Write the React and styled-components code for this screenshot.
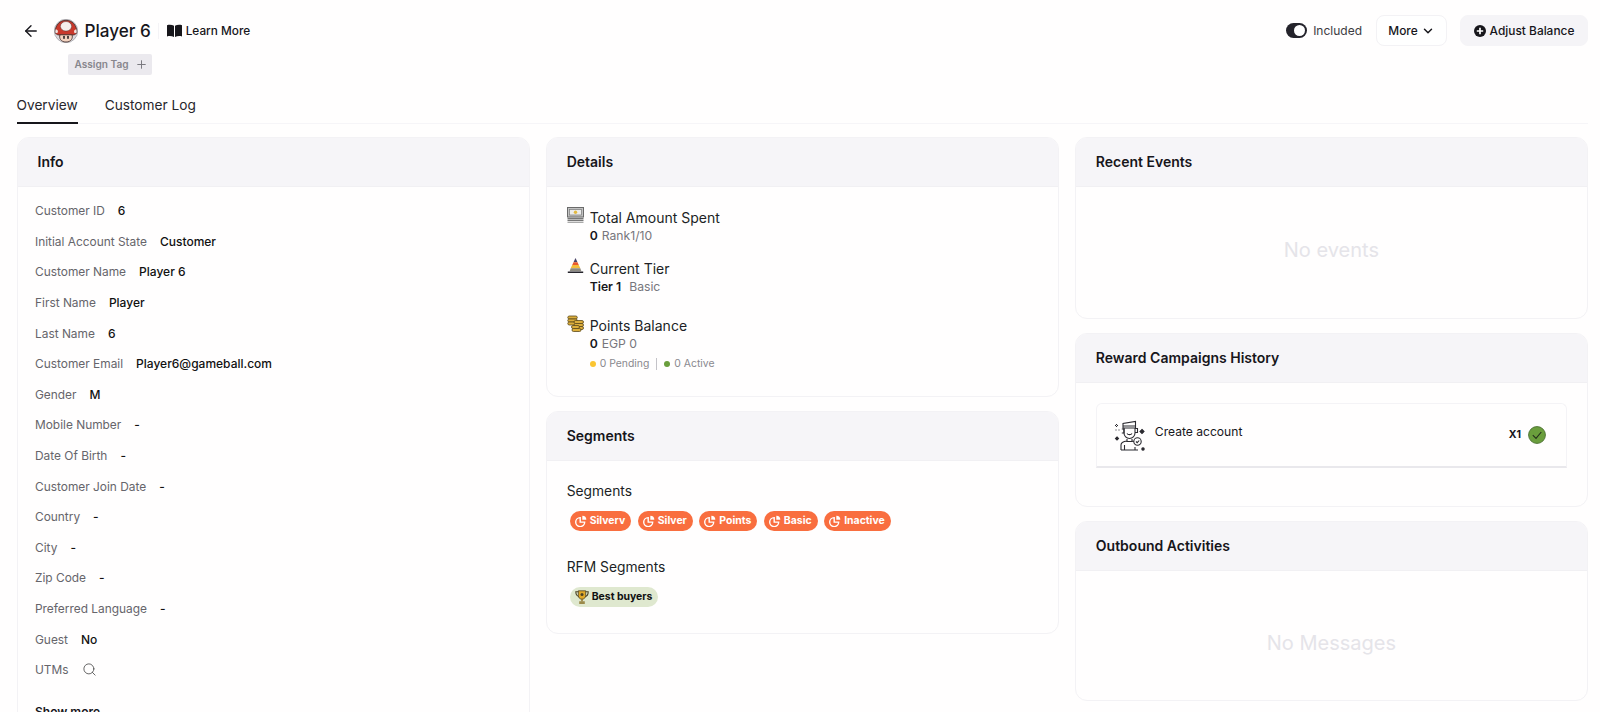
import React from "react";
import styled, { createGlobalStyle } from "styled-components";
import { ArrowLeft, Plus, ChevronDown, Search } from "lucide-react";

const Global = createGlobalStyle`
  html, body { margin: 0; height: 712px; overflow: hidden; background: #fffefe; }
  body { font-family: Inter, "Liberation Sans", sans-serif; color: #17161b; }
  * { box-sizing: border-box; }
`;
const Page = styled.div`height: 712px; overflow: hidden; padding: 15px 12px 0 16.5px;`;
const TopBar = styled.header`display: flex; justify-content: space-between; align-items: flex-start; height: 37px;`;
const Identity = styled.div`display: flex; align-items: center; height: 31px; padding-left: 5px;`;
const Back = styled.span`display: flex; width: 32px; color: #17161b;`;
const Name = styled.h1`margin: 0 0 0 7px; font-size: 17.1px; line-height: 31px; font-weight: 500;`;
const Divider = styled.span`width: 1px; height: 16px; background: #f4f3f6; margin: 0 8px 0 7px;`;
const LearnMore = styled.a`display: flex; align-items: center; gap: 4px; font-size: 11.8px; font-weight: 500;`;
const Actions = styled.div`display: flex; align-items: center; height: 31px;`;
const Toggle = styled.span`position: relative; width: 21px; height: 15px; border-radius: 8px; background: #24232b;
  &::after { content: ""; position: absolute; top: 2px; right: 2px; width: 11px; height: 11px; border-radius: 50%; background: #fff; }`;
const Included = styled.span`margin: 0 14px 0 6px; font-size: 12px; color: #3c3b42;`;
const Button = styled.button`display: flex; align-items: center; justify-content: center; height: 31px; width: ${p => p.$w}px;
  gap: ${p => p.$gap}px; padding: 0; font: 500 11.9px Inter, sans-serif; color: #17161b; border-radius: 8px;
  border: 1px solid ${p => p.$fill ? "#f5f4f7" : "#f3f2f5"}; background: ${p => p.$fill ? "#f5f4f7" : "#fff"};`;
const MoreButton = styled(Button)`margin-right: 13px;`;
const TagBox = styled.div`display: inline-flex; align-items: center; gap: 6px; margin-left: 51.500px; height: 21px; width: 84px; padding-left: 6.500px;
  border-radius: 2px; background: #ebe9ee; color: #87868c; font-size: 10.1px; font-weight: 600;`;
const Tabs = styled.nav`display: flex; gap: 27px; margin-top: 19px; height: 30px; border-bottom: 1px solid #f6f5f8;`;
const Tab = styled.span`height: 30px; font-size: 13.7px; line-height: 22px; color: #27262c; border-bottom: ${p => p.$on ? "2px solid #17161b" : "0"};`;
const Grid = styled.main`display: grid; grid-template-columns: repeat(3, 513.170px); gap: 16px; margin-top: 13px; align-items: start;`;
const Column = styled.div`display: flex; flex-direction: column; gap: 14px;`;
const Card = styled.section`border: 1px solid #f3f2f5; border-radius: 12px; background: #fffefe; overflow: hidden; height: ${p => p.$h}px;`;
const CardHead = styled.h2`margin: 0; height: 49px; padding: 0 0 1px 20px; display: flex; align-items: center; background: #f6f5f8;
  font-size: 14px; font-weight: 600; border-bottom: 1px solid #f1f0f3;`;
const InfoBody = styled.div`padding: 9px 0 0 17.500px;`;
const InfoRow = styled.div`display: flex; align-items: center; gap: 13px; height: 30.6px; font-size: 12px;`;
const Label = styled.span`color: #66656b; font-size: 11.9px;`;
const Val = styled.span`font-weight: 500; color: #111;`;
const ShowMore = styled.div`margin-top: 19px; font-size: 12px; font-weight: 600;`;
const DetailsBody = styled.div`padding: 22px 20px 0;`;
const Stat = styled.div`display: grid; grid-template-columns: 17px 1fr; column-gap: 6px; margin-bottom: ${p => p.$mb}px;`;
const StatIcon = styled.span`display: block; margin-top: -2px; height: 17px;`;
const StatTitle = styled.div`font-size: 14px; line-height: 18px; color: #201f25;`;
const StatSub = styled.div`grid-column: 2; font-size: 12.2px; line-height: 18px; color: #77767c; b { font-weight: 600; color: #17161b; margin-right: ${p => p.$mr}px; }`;
const StatusLine = styled.div`grid-column: 2; display: flex; align-items: center; margin-top: 2px; height: 18px; font-size: 10.4px; color: #8a898f;`;
const Dot = styled.i`width: 6px; height: 6px; border-radius: 50%; background: ${p => p.$c}; margin-right: 4px;`;
const Sep = styled.i`width: 1px; height: 12px; background: #c4c3c8; margin: 0 7px;`;
const SegBody = styled.div`padding: 21px 20px 0;`;
const SegTitle = styled.div`font-size: 13.8px; line-height: 18px; color: #201f25;`;
const Chips = styled.div`display: flex; gap: 6.500px; margin: 11px 0 27px 3px;`;
const Chip = styled.span`display: inline-flex; align-items: center; justify-content: center; gap: 3px; height: 20px; padding: 0 6px 0 5px; border-radius: 10px;
  background: ${p => p.$bg}; color: ${p => p.$c}; font-size: 10.45px; font-weight: 700;`;
const Empty = styled.div`display: flex; align-items: center; justify-content: center; height: ${p => p.$h}px; padding-top: ${p => p.$pt}px; font-size: 20px; color: #e5e4e9;`;
const RewardBody = styled.div`padding: 20px 20px 0;`;
const RewardRow = styled.div`display: flex; height: 65px; padding: 15px 20px 0 16px; border: 1px solid #f4f3f6; border-bottom: 2px solid #e9e8ec; border-radius: 6px 6px 0 0;`;
const RewardText = styled.span`margin-left: 9px; font-size: 12.1px; line-height: 26px; flex: 1;`;
const Times = styled.span`font-size: 10.5px; font-weight: 700; margin: 9px 7px 0 0; line-height: 14px;`;
const Check = styled.span`display: block; margin-top: 7px; height: 18px;`;

const Book = () => <svg width="15" height="13" viewBox="0 0 15 13"><path fill="#17161b" d="M0 1.2C2.4.4 5 .6 7 1.8V13c-2-1.100-4.600-1.300-7-.6zM15 1.200C12.600.4 10 .6 8 1.800V13c2-1.100 4.600-1.300 7-.6z"/></svg>;
const Mushroom = () => <svg width="24" height="24" viewBox="0 0 24 24">
  <circle cx="12" cy="12" r="11.700" fill="#dcdbdf" stroke="#8d8c92" strokeWidth=".6"/>
  <path d="M1.200 13C1.200 6 6 1.300 12 1.300S22.800 6 22.800 13c0 1.800-2 3-4 3H5.200c-2 0-4-1.200-4-3z" fill="#c9392c" stroke="#3f2724" strokeWidth=".8"/>
  <ellipse cx="12" cy="7.300" rx="5.600" ry="4.800" fill="#f5efec" stroke="#5a3330" strokeWidth=".5"/>
  <path d="M1.600 10.500c2.200-.4 3.200 2.400 1.400 3.800l-1.800-.7zM22.400 10.500c-2.200-.4-3.200 2.400-1.400 3.800l1.800-.7z" fill="#f0e6e2"/>
  <path d="M6 15.800h12c1.200 3-.6 7.200-6 7.200S4.800 18.800 6 15.800z" fill="#f4d3c0" stroke="#3f2724" strokeWidth=".8"/>
  <rect x="9.200" y="16.800" width="1.600" height="3.300" rx=".8" fill="#262224"/><rect x="13.200" y="16.800" width="1.600" height="3.300" rx=".8" fill="#262224"/>
</svg>;
const PlusFill = () => <svg width="12" height="12" viewBox="0 0 12 12"><circle cx="6" cy="6" r="6" fill="#17161b"/><path d="M6 2.800v6.400M2.800 6h6.400" stroke="#fff" strokeWidth="1.700"/></svg>;
const Money = () => <svg width="17" height="16" viewBox="0 0 17 16"><rect x=".5" y=".5" width="16" height="9.500" fill="#c2c2c2" stroke="#6a6a6a"/><rect x="2.500" y="2.500" width="12" height="5.500" fill="#ececec" stroke="#7a7a7a" strokeWidth=".7"/><circle cx="8.500" cy="5.200" r="1.700" fill="#e2b93f"/><path d="M.5 11.500h16M.5 13.500h16" stroke="#777" strokeWidth="1.300"/><path d="M.5 15.500h16" stroke="#aaa"/></svg>;
const Pyramid = () => <svg width="17" height="16" viewBox="0 0 17 16"><path d="M8.500 0l2 4.200h-4z" fill="#4a4468"/><path d="M6.500 4.200h4L11.800 7H5.200z" fill="#ea5a2c"/><path d="M5.200 7h6.600l1.500 3.200H3.700z" fill="#f4bd3c"/><path d="M3.700 10.200h9.600l1.100 3H2.600z" fill="#8d8a80"/><path d="M.8 14.200h15.400" stroke="#26252c" strokeWidth="1.500"/></svg>;
const Coins = () => <svg width="17" height="17" viewBox="0 0 17 17"><g fill="#dcae3c" stroke="#5c4a1c" strokeWidth=".8"><rect x=".8" y="1" width="9.500" height="3" rx="1.500"/><rect x=".8" y="4" width="9.500" height="3" rx="1.500"/><rect x=".8" y="7" width="9.500" height="3" rx="1.500"/><rect x="7" y="5.500" width="9.500" height="3" rx="1.500"/><rect x="7" y="8.500" width="9.500" height="3" rx="1.500"/><rect x="7" y="11.500" width="9.500" height="3" rx="1.500"/><rect x="4.500" y="10.500" width="8" height="3" rx="1.500"/><rect x="5" y="13.500" width="9" height="3" rx="1.500"/></g></svg>;
const Pie = () => <svg width="12" height="12" viewBox="0 0 12 12" fill="none" stroke="#fff" strokeWidth="1.400"><path d="M5.200 2.600a4.500 4.500 0 1 0 4.500 4.500H5.200z"/><path d="M7.300.8A4 4 0 0 1 11.300 4.800H7.300z" fill="#fff" stroke="none"/></svg>;
const Trophy = () => <svg width="14" height="14" viewBox="0 0 14 14"><path d="M.8 1.800h12.400c0 3-1.500 4.700-3.700 4.700h-5C2.300 6.500.8 4.800.8 1.800z" fill="none" stroke="#4c4326" strokeWidth="1.100"/><path d="M3.300 .8h7.400v4.700c0 2.100-1.600 3.700-3.700 3.700S3.300 7.600 3.300 5.500z" fill="#e0a92a" stroke="#4c4326" strokeWidth=".8"/><circle cx="7" cy="4.500" r="1.500" fill="#4c4326"/><path d="M6.300 9h1.400v2.500H6.300z" fill="#8a6b20"/><path d="M4.200 11.300h5.600V14H4.200z" fill="#9b8a4a"/></svg>;
const Person = () => <svg width="33" height="33" viewBox="0 0 33 33" fill="none" stroke="#2b2a30" strokeWidth="1.100">
  <path d="M10 9V4.500L22.500 2.500V9zM10 7h12.500"/><path d="M11 9v5c0 3 2.500 5.500 5.500 5.500S22 17 22 14V9"/><path d="M14 14.500c1 1.500 4 1.500 5 0"/>
  <path d="M22 9.500h2.500v4H22M8.800 10h2.200v4H8.800"/>
  <path d="M14 20v2.500h5V20M8 31v-5c0-2.500 2-3.500 6-4M25 24.500c-1-1-3-2-6-2.500M8 31h17M11.500 26v5M22 28v3"/>
  <circle cx="24.500" cy="22.500" r="3.700" fill="#fff"/><path d="M23 22.500l1.200 1.200 2-2.200"/>
  <path d="M29 10.500l2 2-2 2-2-2zM4 18l1.500 1.500L4 21l-1.500-1.500z" fill="#2b2a30"/><circle cx="30" cy="30" r="1.200" fill="#2b2a30"/>
  <path d="M2 6.500h3M3.500 5v3M5.500 11h1.500M2.500 11h1" strokeDasharray="1 1"/>
</svg>;
const CheckIcon = () => <svg width="18" height="18" viewBox="0 0 18 18"><circle cx="9" cy="9" r="8.400" fill="#6a9e3c" stroke="#54783a"/><path d="M4.800 9.200l3.200 3.200 5.300-6.400" fill="none" stroke="#24301c" strokeWidth="1.100"/></svg>;

const info = [["Customer ID","6"],["Initial Account State","Customer"],["Customer Name","Player 6"],["First Name","Player"],["Last Name","6"],["Customer Email","Player6@gameball.com"],["Gender","M"],["Mobile Number","-"],["Date Of Birth","-"],["Customer Join Date","-"],["Country","-"],["City","-"],["Zip Code","-"],["Preferred Language","-"],["Guest","No"]];
const segs = ["Silverv","Silver","Points","Basic","Inactive"];

export default function App() {
  return <Page>
    <Global />
    <TopBar>
      <Identity>
        <Back><ArrowLeft size={18} strokeWidth={1.800} /></Back>
        <Mushroom /><Name>Player 6</Name><Divider />
        <LearnMore><Book />Learn More</LearnMore>
      </Identity>
      <Actions>
        <Toggle /><Included>Included</Included>
        <MoreButton $w={71} $gap={3}>More <ChevronDown size={14} strokeWidth={2.500} /></MoreButton>
        <Button $w={128} $gap={4} $fill><PlusFill />Adjust Balance</Button>
      </Actions>
    </TopBar>
    <TagBox>Assign Tag <Plus size={13} strokeWidth={1.800} color="#77767c" /></TagBox>
    <Tabs><Tab $on>Overview</Tab><Tab>Customer Log</Tab></Tabs>
    <Grid>
      <Column>
        <Card $h={640}>
          <CardHead>Info</CardHead>
          <InfoBody>
            {info.map(([k, v]) => <InfoRow key={k}><Label>{k}</Label><Val>{v}</Val></InfoRow>)}
            <InfoRow><Label>UTMs</Label><Search size={15} strokeWidth={1.300} color="#444" /></InfoRow>
            <ShowMore>Show more</ShowMore>
          </InfoBody>
        </Card>
      </Column>
      <Column>
        <Card $h={260}>
          <CardHead>Details</CardHead>
          <DetailsBody>
            <Stat $mb={15}><StatIcon><Money /></StatIcon><StatTitle>Total Amount Spent</StatTitle><StatSub $mr={4}><b>0</b>Rank1/10</StatSub></Stat>
            <Stat $mb={21}><StatIcon><Pyramid /></StatIcon><StatTitle>Current Tier</StatTitle><StatSub $mr={8}><b>Tier 1</b>Basic</StatSub></Stat>
            <Stat $mb={0}><StatIcon><Coins /></StatIcon><StatTitle>Points Balance</StatTitle><StatSub $mr={4}><b>0</b>EGP 0</StatSub>
              <StatusLine><Dot $c="#fbc531" />0 Pending<Sep /><Dot $c="#6a9e3c" />0 Active</StatusLine></Stat>
          </DetailsBody>
        </Card>
        <Card $h={223}>
          <CardHead>Segments</CardHead>
          <SegBody>
            <SegTitle>Segments</SegTitle>
            <Chips>{segs.map(s => <Chip key={s} $bg="#f96e3f" $c="#fff"><Pie />{s}</Chip>)}</Chips>
            <SegTitle>RFM Segments</SegTitle>
            <Chips><Chip $bg="#dfe8cf" $c="#111"><Trophy />Best buyers</Chip></Chips>
          </SegBody>
        </Card>
      </Column>
      <Column>
        <Card $h={182}>
          <CardHead>Recent Events</CardHead>
          <Empty $h={126}>No events</Empty>
        </Card>
        <Card $h={174}>
          <CardHead>Reward Campaigns History</CardHead>
          <RewardBody>
            <RewardRow><Person /><RewardText>Create account</RewardText><Times>X1</Times><Check><CheckIcon /></Check></RewardRow>
          </RewardBody>
        </Card>
        <Card $h={180}>
          <CardHead>Outbound Activities</CardHead>
          <Empty $h={130} $pt={14}>No Messages</Empty>
        </Card>
      </Column>
    </Grid>
  </Page>;
}
